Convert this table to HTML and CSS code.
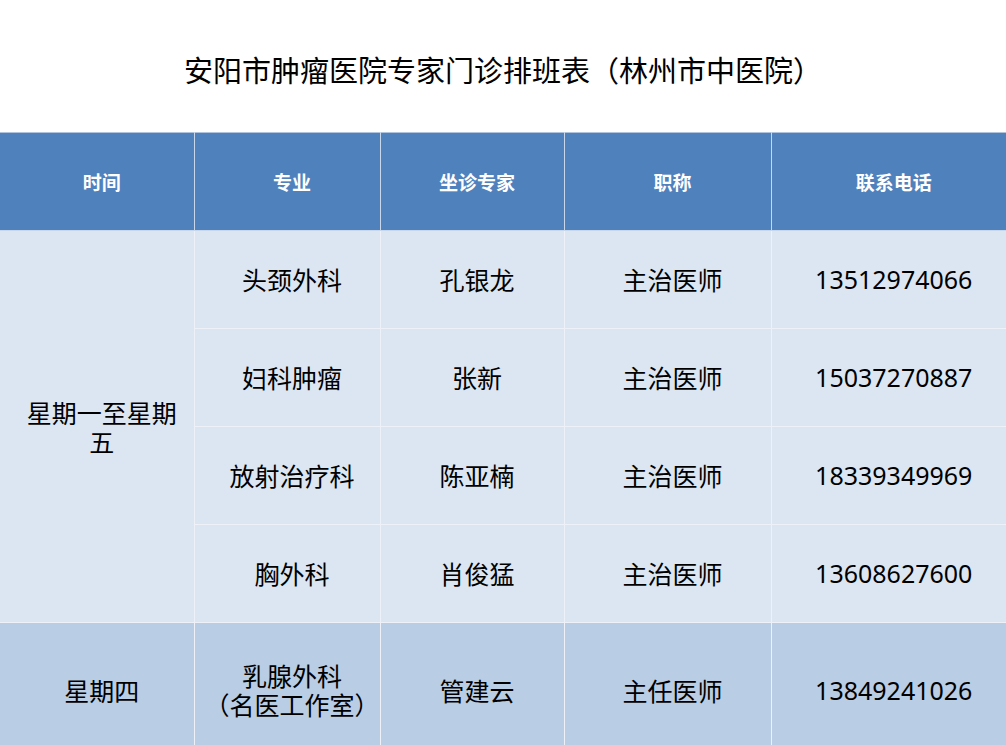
FILE: index.html
```html
<!DOCTYPE html>
<html lang="zh">
<head>
<meta charset="utf-8">
<link rel="stylesheet" href="styles.css">
</head>
<body>
<h1 class="title">安阳市肿瘤医院专家门诊排班表（林州市中医院）</h1>
<table class="schedule">
  <colgroup>
    <col class="c1"><col class="c2"><col class="c3"><col class="c4"><col class="c5">
  </colgroup>
  <thead>
    <tr><th>时间</th><th>专业</th><th>坐诊专家</th><th>职称</th><th>联系电话</th></tr>
  </thead>
  <tbody>
    <tr class="light">
      <td rowspan="4" class="day">星期一至星期<br>五</td>
      <td>头颈外科</td><td>孔银龙</td><td>主治医师</td><td class="num">13512974066</td>
    </tr>
    <tr class="light"><td>妇科肿瘤</td><td>张新</td><td>主治医师</td><td class="num">15037270887</td></tr>
    <tr class="light"><td>放射治疗科</td><td>陈亚楠</td><td>主治医师</td><td class="num">18339349969</td></tr>
    <tr class="light"><td>胸外科</td><td>肖俊猛</td><td>主治医师</td><td class="num">13608627600</td></tr>
    <tr class="dark tall">
      <td>星期四</td><td>乳腺外科<br>（名医工作室）</td><td>管建云</td><td>主任医师</td><td class="num">13849241026</td>
    </tr>
  </tbody>
</table>
</body>
</html>
```

FILE: styles.css
```css
html, body {
  margin: 0;
  padding: 0;
  background: #ffffff;
  font-family: "Noto Sans CJK SC", "Noto Sans", sans-serif;
  color: #000;
}
.title {
  margin: 0;
  height: 132px;
  display: flex;
  align-items: center;
  justify-content: center;
  padding-top: 6px;
  box-sizing: border-box;
  font-size: 29px;
  font-weight: 400;
}
.schedule {
  width: 1006px;
  border-collapse: collapse;
  table-layout: fixed;
}
.c1 { width: 194px; }
.c2 { width: 186px; }
.c3 { width: 184px; }
.c4 { width: 207px; }
.c5 { width: 235px; }
.schedule th {
  background: #4f81bd;
  color: #fff;
  font-size: 19px;
  font-weight: 700;
  height: 97px;
  padding: 0 0 0 10px;
  border: 1px solid #c9d7ea;
  border-top: 1px solid #b0c4de;
}
.schedule th:first-child, .schedule td:first-child { border-left: none; }
.schedule th:last-child, .schedule td:last-child { border-right: none; }
.schedule td {
  text-align: center;
  font-size: 25px;
  line-height: 29px;
  padding: 0 0 0 10px;
  height: 97px;
  border: 1px solid #eef2f8;
}
.light td { background: #dce6f2; }
.dark td { background: #b9cde5; }
.tall td { height: 134px; padding-bottom: 4px; }
.num { font-family: "Noto Sans", "Noto Sans CJK SC", sans-serif; font-size: 25.5px; }
```
